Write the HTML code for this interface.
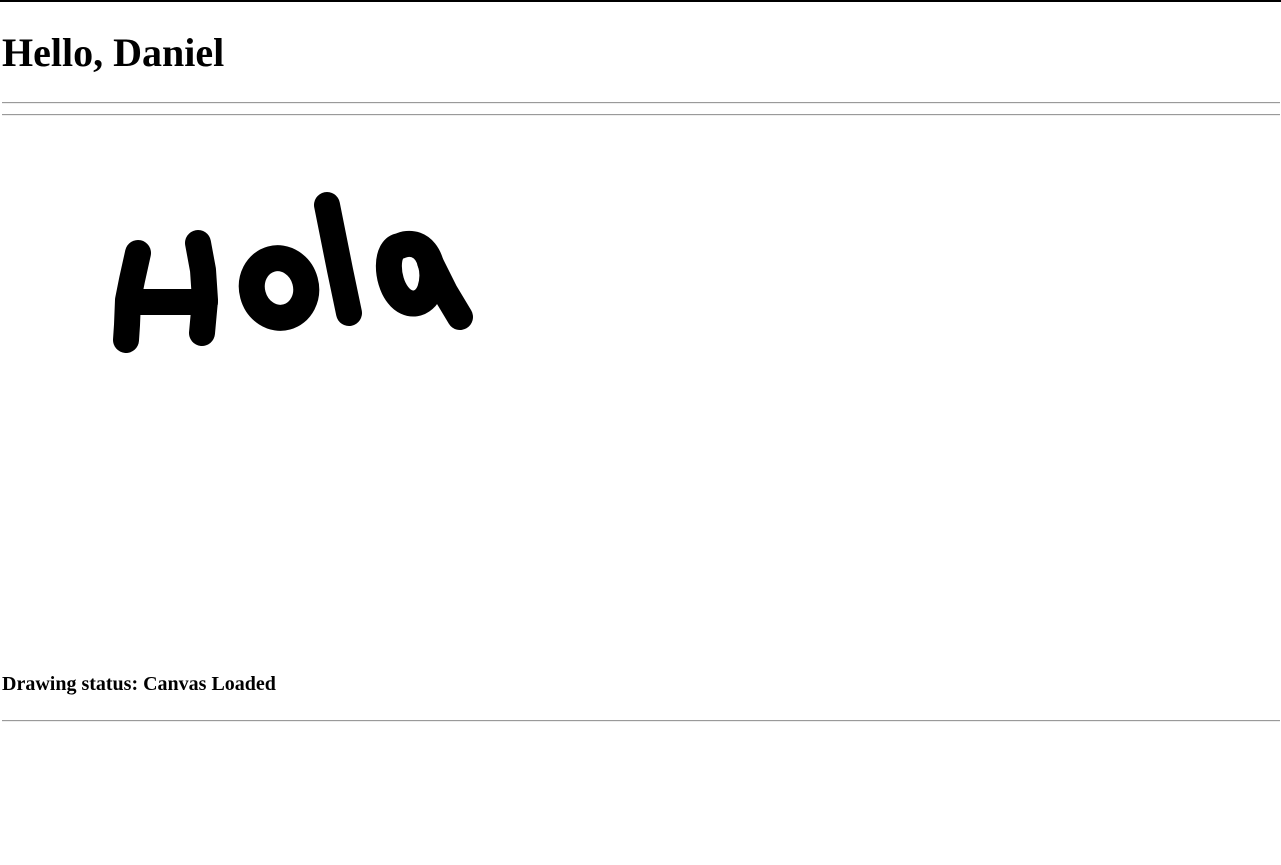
<!DOCTYPE html>
<html><head><style>
body{margin:0;width:1281px;height:865px;position:relative;background:#fff;font-family:"Liberation Serif",serif;overflow:hidden}
.top{position:absolute;left:0;top:0;width:1281px;height:2px;background:#000}
h1{position:absolute;left:2px;top:31px;margin:0;font-size:40px;font-weight:bold;line-height:44px}
.hr{position:absolute;left:2px;width:1278px;height:0;border-top:1px solid #9a9a9a;border-bottom:1px solid #eee}
.st{position:absolute;left:2px;top:673px;font-size:20px;font-weight:bold;line-height:22px}
svg{position:absolute;left:0;top:0}
</style></head><body>
<div class="top"></div>
<h1>Hello, Daniel</h1>
<div class="hr" style="top:102px"></div>
<div class="hr" style="top:114px"></div>
<svg width="1281" height="865"><g fill="none" stroke="#000" stroke-width="26" stroke-linecap="round" stroke-linejoin="round">
<path d="M138 253 L132 280 L128 300 L127 325 L126 340"/>
<path d="M128 302 L205 302"/>
<path d="M198 243 L203 270 L205 300 L202 333"/>
<ellipse cx="279" cy="288" rx="27" ry="30" transform="rotate(-15 279 288)"/>
<path d="M327 205 L335 245 L340 270 L349 313"/>
<path d="M400 246 C385 248 386 280 398 295 C408 308 424 306 430 290 C436 272 430 250 416 245 C410 243 404 244 400 246 Z"/>
<path d="M430 262 L445 292 L460 317"/>
</g></svg>
<div class="st">Drawing status: Canvas Loaded</div>
<div class="hr" style="top:720px"></div>
</body></html>
